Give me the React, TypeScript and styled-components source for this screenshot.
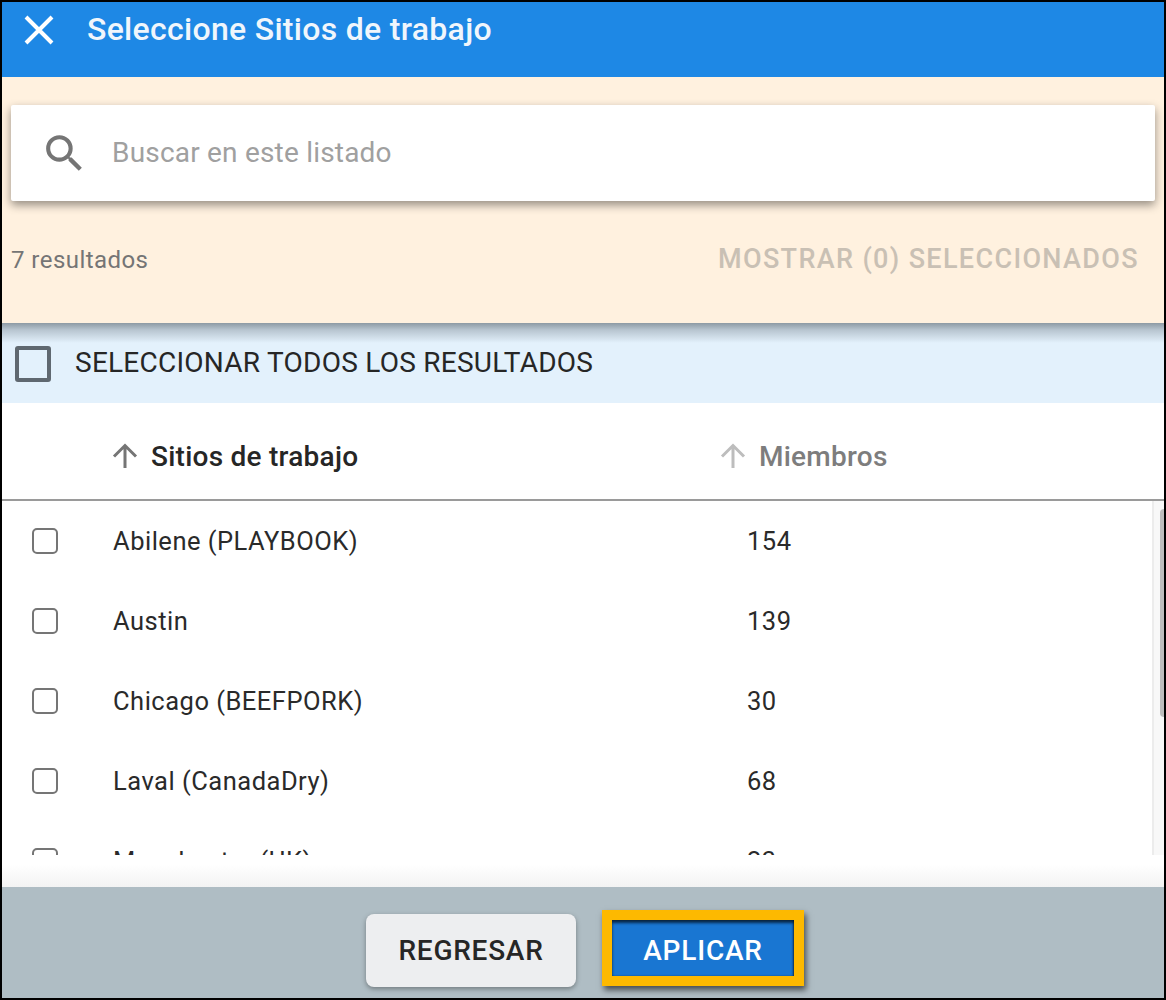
import React from 'react';
import styled, { createGlobalStyle } from 'styled-components';

const Global = createGlobalStyle`
  html, body { margin: 0; padding: 0; background: #000; }
  * { box-sizing: border-box; }
  #root { width: 1166px; height: 1000px; }
`;

const Frame = styled.div`
  width: 1166px;
  height: 1000px;
  border: 2px solid #000;
  display: flex;
  flex-direction: column;
  background: #fff;
  font-family: Roboto, "Liberation Sans", sans-serif;
  overflow: hidden;
`;

const Header = styled.header`
  height: 75px;
  flex: none;
  background: #1e88e5;
  display: flex;
  align-items: flex-start;
  padding: 11px 0 0 20px;
  gap: 31px;
  color: #fff;
`;

const Close = styled.svg`
  width: 34px;
  height: 32px;
  flex: none;
  margin-top: 1px;
`;

const Title = styled.h1`
  margin: 0;
  font-size: 32px;
  line-height: 32px;
  font-weight: 500;
  letter-spacing: 0.3px;
  color: #f0f6fc;
`;

const SearchArea = styled.section`
  height: 246px;
  flex: none;
  background: #fff1df;
  padding: 28px 9px 0 9px;
  display: flex;
  flex-direction: column;
`;

const SearchBox = styled.div`
  height: 96px;
  flex: none;
  background: #fff;
  border-radius: 2px;
  box-shadow: 0 4px 10px rgba(0, 0, 0, 0.42);
  display: flex;
  align-items: center;
  padding-left: 29px;
  gap: 23px;
`;

const SearchIcon = styled.svg`
  width: 49px;
  height: 49px;
  flex: none;
`;

const Placeholder = styled.span`
  font-size: 28px;
  color: #a0a0a0;
  letter-spacing: 0.2px;
  position: relative;
  top: -1px;
`;

const ResultRow = styled.div`
  display: flex;
  align-items: center;
  justify-content: space-between;
  margin-top: 41px;
  padding: 0 16px 0 0;
  height: 34px;
`;

const Count = styled.span`
  font-size: 24px;
  color: #757575;
  letter-spacing: 0.45px;
  position: relative;
  top: 1px;
`;

const ShowSelected = styled.span`
  font-size: 27px;
  font-weight: 500;
  color: #c9c0b4;
  letter-spacing: 1.35px;
`;

const SelectAll = styled.div`
  height: 80px;
  flex: none;
  background: #e3f1fc;
  display: flex;
  align-items: center;
  padding: 0 0 0 13px;
  gap: 24px;
  position: relative;
  &::before {
    content: '';
    position: absolute;
    left: 0;
    right: 0;
    top: 0;
    height: 20px;
    background: linear-gradient(#8d9aa4, rgba(141, 154, 164, 0.5) 35%, rgba(227, 241, 252, 0));
  }
`;

const BigCheck = styled.span`
  width: 36px;
  height: 36px;
  flex: none;
  border: 4px solid #5f6870;
  border-radius: 3px;
  position: relative;
  top: 1px;
`;

const SelectLabel = styled.span`
  font-size: 28px;
  color: #262626;
  letter-spacing: 0.25px;
  position: relative;
  top: -1px;
`;

const TableHead = styled.div`
  height: 98px;
  flex: none;
  display: grid;
  grid-template-columns: 706px 1fr;
  align-items: center;
  padding: 10px 10px 0 0;
  border-bottom: 2px solid #9a9a9a;
`;

const HeadCell = styled.div<{ $muted?: boolean; $inset: number }>`
  display: flex;
  align-items: center;
  gap: 11px;
  padding-left: ${(p) => p.$inset}px;
  font-size: 28px;
  font-weight: 500;
  letter-spacing: 0.25px;
  color: ${(p) => (p.$muted ? '#7d7d7d' : '#262626')};
`;

const Arrow = styled.svg<{ $muted?: boolean }>`
  width: 30px;
  height: 30px;
  flex: none;
  color: ${(p) => (p.$muted ? '#bdbdbd' : '#757575')};
`;

const Body = styled.div`
  height: 354px;
  flex: none;
  overflow: hidden;
  position: relative;
`;

const Row = styled.div`
  height: 80px;
  display: grid;
  grid-template-columns: 81px 634px 1fr;
  align-items: center;
  padding-left: 30px;
  font-size: 25.5px;
  color: #2a2a2a;
  letter-spacing: 0.5px;
`;

const SmallCheck = styled.span`
  width: 26px;
  height: 26px;
  border: 2px solid #757575;
  border-radius: 5px;
  background: #fff;
`;

const Track = styled.div`
  position: absolute;
  right: 0;
  top: 0;
  width: 12px;
  height: 354px;
  background: #f8f8f8;
  border-left: 2px solid #ececec;
`;

const Thumb = styled.div`
  position: absolute;
  right: 0;
  top: 8px;
  width: 4px;
  height: 208px;
  background: #bdbdbd;
  border-radius: 4px 0 0 4px;
`;

const Spacer = styled.div`
  height: 32px;
  flex: none;
  background: linear-gradient(#fff 30%, #f3f3f3);
`;

const Footer = styled.footer`
  flex: 1;
  background: #afbdc4;
  display: flex;
  align-items: flex-start;
  justify-content: center;
  gap: 26px;
  padding: 27px 0 0 4px;
`;

const BackButton = styled.button`
  width: 210px;
  height: 73px;
  border: 0;
  border-radius: 8px;
  background: #edeef0;
  color: #262626;
  font: 500 28px Roboto, sans-serif;
  letter-spacing: 0.75px;
  box-shadow: 0 2px 5px rgba(0, 0, 0, 0.35);
`;

const ApplyButton = styled.button`
  width: 202px;
  height: 76px;
  margin-top: -4px;
  padding: 4px 0 0;
  border: 10px solid #fdb900;
  border-radius: 0;
  background: #1976d2;
  color: #fff;
  font: 500 28px Roboto, sans-serif;
  letter-spacing: 0.8px;
  box-shadow: 2px 4px 6px rgba(0, 0, 0, 0.6), inset 0 3px 3px rgba(0, 0, 0, 0.65), inset -1px 0 2px rgba(0, 0, 0, 0.4);
`;

const UpArrow = ({ muted }: { muted?: boolean }) => (
  <Arrow $muted={muted} viewBox="0 0 30 30" fill="none" stroke="currentColor" strokeWidth="3">
    <path d="M15 27V5M4 15.5 15 4.5l11 11" />
  </Arrow>
);

const rows = [
  ['Abilene (PLAYBOOK)', '154'],
  ['Austin', '139'],
  ['Chicago (BEEFPORK)', '30'],
  ['Laval (CanadaDry)', '68'],
  ['Manchester (UK)', '23'],
];

export default function App() {
  return (
    <Frame>
      <Global />
      <Header>
        <Close viewBox="0 0 34 32" fill="none" stroke="#fff" strokeWidth="4">
          <path d="M4 3 30 29M30 3 4 29" />
        </Close>
        <Title>Seleccione Sitios de trabajo</Title>
      </Header>
      <SearchArea>
        <SearchBox>
          <SearchIcon viewBox="0 0 24 24" fill="#757575">
            <path d="M15.5 14h-.79l-.28-.27A6.47 6.47 0 0 0 16 9.5 6.5 6.5 0 1 0 9.5 16c1.61 0 3.09-.59 4.23-1.57l.27.28v.79l5 4.99L20.49 19l-4.99-5zm-6 0C7.01 14 5 11.99 5 9.5S7.01 5 9.5 5 14 7.01 14 9.5 11.99 14 9.5 14z" />
          </SearchIcon>
          <Placeholder>Buscar en este listado</Placeholder>
        </SearchBox>
        <ResultRow>
          <Count>7 resultados</Count>
          <ShowSelected>MOSTRAR (0) SELECCIONADOS</ShowSelected>
        </ResultRow>
      </SearchArea>
      <SelectAll>
        <BigCheck />
        <SelectLabel>SELECCIONAR TODOS LOS RESULTADOS</SelectLabel>
      </SelectAll>
      <TableHead>
        <HeadCell $inset={108}>
          <UpArrow />
          Sitios de trabajo
        </HeadCell>
        <HeadCell $inset={10} $muted>
          <UpArrow muted />
          Miembros
        </HeadCell>
      </TableHead>
      <Body>
        {rows.map(([name, count]) => (
          <Row key={name}>
            <SmallCheck />
            <span>{name}</span>
            <span>{count}</span>
          </Row>
        ))}
        <Track>
          <Thumb />
        </Track>
      </Body>
      <Spacer />
      <Footer>
        <BackButton>REGRESAR</BackButton>
        <ApplyButton>APLICAR</ApplyButton>
      </Footer>
    </Frame>
  );
}
